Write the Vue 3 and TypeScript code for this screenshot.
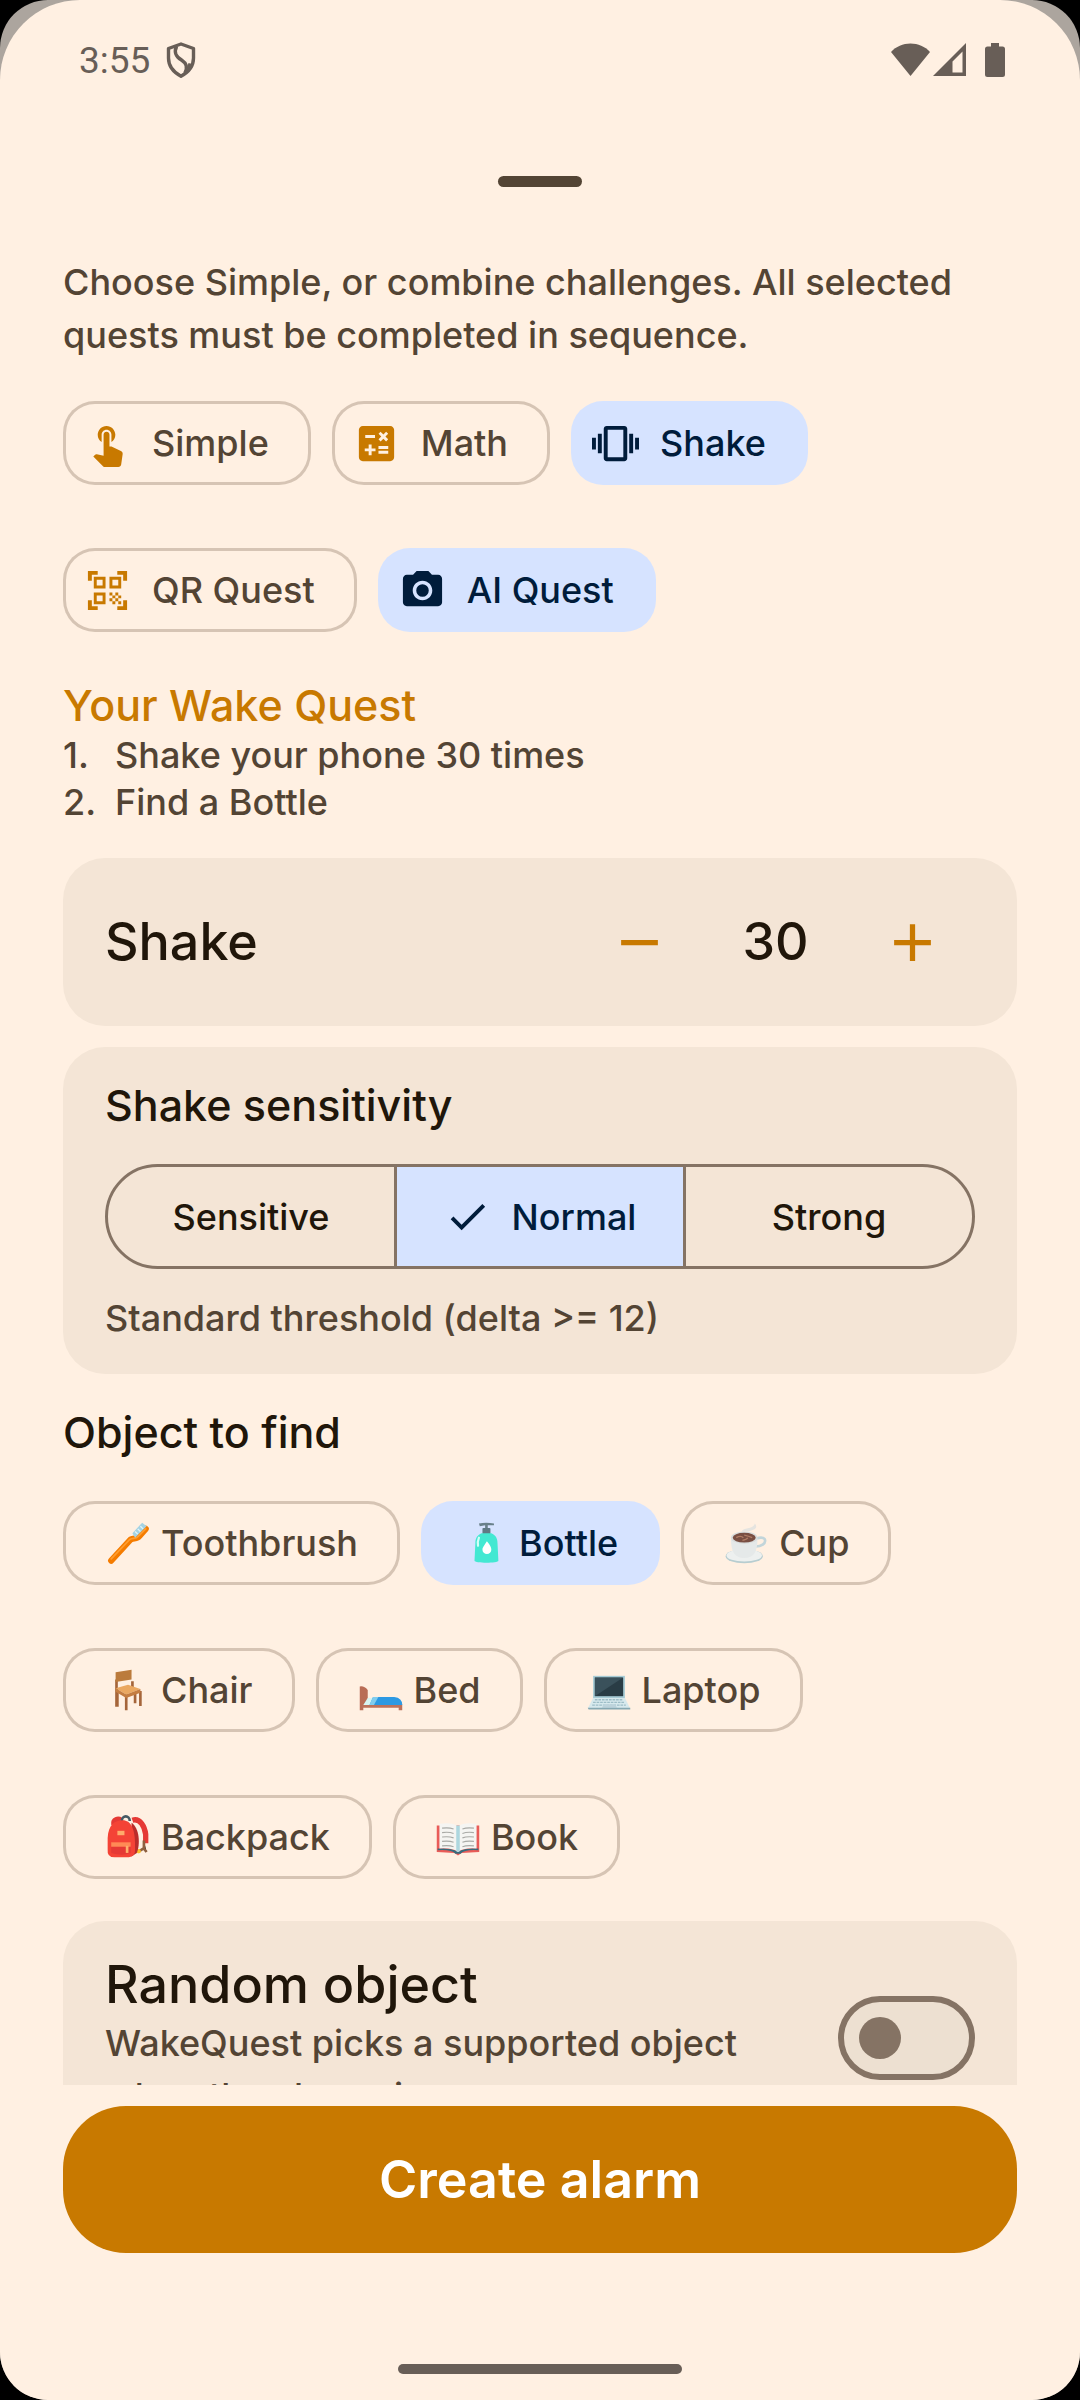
<script setup lang="ts">
import { ref } from 'vue'

interface Quest {
  id: string
  label: string
  path: string
}

interface FindObject {
  id: string
  label: string
}

const quests: Quest[] = [
  {
    id: 'simple',
    label: 'Simple',
    path: 'M9 11.24V7.5C9 6.12 10.12 5 11.5 5S14 6.12 14 7.5v3.74c1.21-.81 2-2.18 2-3.74C16 5.01 13.99 3 11.5 3S7 5.01 7 7.5c0 1.56.79 2.93 2 3.74zm9.84 4.63l-4.54-2.26c-.17-.07-.35-.11-.54-.11H13v-6c0-.83-.67-1.5-1.5-1.5S10 6.67 10 7.5v10.74l-3.43-.72c-.08-.01-.15-.03-.24-.03-.31 0-.59.13-.79.33l-.79.8 4.94 4.94c.27.27.65.44 1.06.44h6.79c.75 0 1.33-.55 1.44-1.28l.75-5.27c.01-.07.02-.14.02-.2 0-.62-.38-1.16-.91-1.38z',
  },
  {
    id: 'math',
    label: 'Math',
    path: 'M19 3H5c-1.1 0-2 .9-2 2v14c0 1.1.9 2 2 2h14c1.1 0 2-.9 2-2V5c0-1.1-.9-2-2-2zm-5.97 4.06L14.09 6l1.41 1.41L16.91 6l1.06 1.06-1.41 1.41 1.41 1.41-1.06 1.06-1.41-1.4-1.41 1.41-1.06-1.06 1.41-1.41-1.41-1.42zM6.25 7.72h5v1.5h-5v-1.5zM11.5 16h-2v2H8v-2H6v-1.5h2v-2h1.5v2h2V16zm6.5 1.25h-5v-1.5h5v1.5zm0-2.5h-5v-1.5h5v1.5z',
  },
  {
    id: 'shake',
    label: 'Shake',
    path: 'M0 15h2V9H0v6zm3 2h2V7H3v10zm19-8v6h2V9h-2zm-3 8h2V7h-2v10zM16.5 3h-9C6.67 3 6 3.67 6 4.5v15c0 .83.67 1.5 1.5 1.5h9c.83 0 1.5-.67 1.5-1.5v-15c0-.83-.67-1.5-1.5-1.5zM16 19H8V5h8v14z',
  },
  {
    id: 'qr',
    label: 'QR Quest',
    path: 'M9.5 6.5v3h-3v-3h3M11 5H5v6h6V5zm-1.5 9.5v3h-3v-3h3M11 13H5v6h6v-6zm6.5-6.5v3h-3v-3h3M19 5h-6v6h6V5zm-6 8h1.5v1.5H13V13zm1.5 1.5H16V16h-1.5v-1.5zM16 13h1.5v1.5H16V13zm-3 3h1.5v1.5H13V16zm1.5 1.5H16V19h-1.5v-1.5zM16 16h1.5v1.5H16V16zm1.5-1.5H19V16h-1.5v-1.5zm0 3H19V19h-1.5v-1.5zM22 7h-2V4h-3V2h5v5zm0 15v-5h-2v3h-3v2h5zM2 22h5v-2H4v-3H2v5zM2 2v5h2V4h3V2H2z',
  },
  {
    id: 'ai',
    label: 'AI Quest',
    path: 'M12 8.8a3.2 3.2 0 1 0 0 6.4 3.2 3.2 0 1 0 0-6.4zM9 2 7.17 4H4c-1.1 0-2 .9-2 2v12c0 1.1.9 2 2 2h16c1.1 0 2-.9 2-2V6c0-1.1-.9-2-2-2h-3.17L15 2H9zm3 15c-2.76 0-5-2.24-5-5s2.24-5 5-5 5 2.24 5 5-2.24 5-5 5z',
  },
]

const objects: FindObject[] = [
  { id: 'toothbrush', label: 'Toothbrush' },
  { id: 'bottle', label: 'Bottle' },
  { id: 'cup', label: 'Cup' },
  { id: 'chair', label: 'Chair' },
  { id: 'bed', label: 'Bed' },
  { id: 'laptop', label: 'Laptop' },
  { id: 'backpack', label: 'Backpack' },
  { id: 'book', label: 'Book' },
]

const levels = ['Sensitive', 'Normal', 'Strong']

const selectedQuests = ref<string[]>(['shake', 'ai'])
const selectedObject = ref('bottle')
const level = ref('Normal')
const shakes = ref(30)
const randomObject = ref(false)

function toggleQuest(id: string) {
  selectedQuests.value = selectedQuests.value.includes(id)
    ? selectedQuests.value.filter((q) => q !== id)
    : [...selectedQuests.value, id]
}
</script>

<template>
  <div class="device">
    <div class="scrim">
      <main class="sheet">
        <header class="status">
          <span class="clock">3:55</span>
          <svg class="shield" viewBox="0 0 30 36" aria-hidden="true">
            <path d="M15 2 27.500 6.500V16c0 8.500-5.500 14.500-12.500 18.200C8 30.500 2.500 24.500 2.500 16V6.500z" fill="none" stroke="currentColor" stroke-width="3.400" stroke-linejoin="round" />
            <path d="M10.500 4.500C7.500 11 10 14.500 15.500 18c5 3.300 6.500 7 3.500 13" fill="none" stroke="currentColor" stroke-width="3.600" />
            <path d="M22.500 21 26 22l-7 9.500z" fill="currentColor" />
          </svg>
          <span class="spacer"></span>
          <svg class="radio" viewBox="0 0 76 34" aria-hidden="true">
            <path d="M0 9C5 3.500 12 .500 19.500 .500S34 3.500 39 9L19.500 33z" fill="currentColor" />
            <path d="M75 0v33H42zM71.500 8.500 61.500 18.500V29.500h10z" fill="currentColor" fill-rule="evenodd" />
          </svg>
          <svg class="battery" viewBox="0 0 20 34" aria-hidden="true">
            <path d="M6 0h8v3.500h3.500A2.500 2.500 0 0 1 20 6v25.500a2.500 2.500 0 0 1-2.500 2.500h-15A2.500 2.500 0 0 1 0 31.500V6a2.500 2.500 0 0 1 2.500-2.500H6z" fill="currentColor" />
          </svg>
        </header>

        <div class="handle"></div>

        <div class="scroll">
          <p class="body">Choose Simple, or combine challenges. All selected quests must be completed in sequence.</p>

          <div class="chips quests">
            <button
              v-for="q in quests"
              :key="q.id"
              type="button"
              class="chip with-icon"
              :class="{ on: selectedQuests.includes(q.id) }"
              :aria-pressed="selectedQuests.includes(q.id)"
              @click="toggleQuest(q.id)"
            >
              <svg class="icon" viewBox="0 0 24 24" aria-hidden="true"><path :d="q.path" fill="currentColor" /></svg>
              <span>{{ q.label }}</span>
            </button>
          </div>

          <section class="summary">
            <h2 class="title accent">Your Wake Quest</h2>
            <ol class="steps">
              <li><span class="num">1.</span><span>Shake your phone {{ shakes }} times</span></li>
              <li><span class="num">2.</span><span>Find a Bottle</span></li>
            </ol>
          </section>

          <section class="card counter">
            <h2 class="large">Shake</h2>
            <button type="button" class="step" aria-label="Fewer shakes" @click="shakes--">
              <svg viewBox="0 0 24 24" aria-hidden="true"><path d="M5 11h14v2H5z" fill="currentColor" /></svg>
            </button>
            <output class="large value">{{ shakes }}</output>
            <button type="button" class="step" aria-label="More shakes" @click="shakes++">
              <svg viewBox="0 0 24 24" aria-hidden="true"><path d="M19 13h-6v6h-2v-6H5v-2h6V5h2v6h6z" fill="currentColor" /></svg>
            </button>
          </section>

          <section class="card sensitivity">
            <h2 class="title">Shake sensitivity</h2>
            <div class="segments" role="radiogroup" aria-label="Shake sensitivity">
              <label v-for="l in levels" :key="l" class="segment" :class="{ on: level === l }">
                <input v-model="level" type="radio" name="level" :value="l" />
                <svg v-if="level === l" class="icon" viewBox="0 0 24 24" aria-hidden="true">
                  <path d="M9 16.170 4.830 12l-1.420 1.410L9 19 21 7l-1.410-1.410z" fill="currentColor" />
                </svg>
                <span>{{ l }}</span>
              </label>
            </div>
            <p class="body">Standard threshold (delta &gt;= 12)</p>
          </section>

          <h2 class="title objects-title">Object to find</h2>
          <div class="chips">
            <button
              v-for="o in objects"
              :key="o.id"
              type="button"
              class="chip"
              :class="{ on: selectedObject === o.id }"
              :aria-pressed="selectedObject === o.id"
              @click="selectedObject = o.id"
            >
              <svg class="emoji" viewBox="-2 -2 52 52" aria-hidden="true">
                <g v-if="o.id === 'toothbrush'">
                  <path d="M5 42 27 18c4-2 7 0 10-4l7-8" stroke="#f57c00" stroke-width="7" stroke-linecap="round" fill="none" transform="translate(0 2)" />
                  <path d="M5 42 26 20c4-2 7 0 10-4l8-8" stroke="#ff9d2f" stroke-width="2" stroke-linecap="round" fill="none" />
                  <path d="m29 13 11-12 5 4-13 13z" fill="#a4d3e4" />
                  <path d="m32 11 3 3m0-6 3 3m0-6 3 3" stroke="#e4f4f8" stroke-width="1.500" />
                </g>
                <g v-else-if="o.id === 'bottle'">
                  <path d="M16 2q8-2 17 0v2h-7v4h-3V4l-6 1z" fill="#69808a" />
                  <rect x="20" y="7" width="9" height="7" rx="1" fill="#607984" />
                  <path d="M19 13h11c5 2 7 6 7 11l1 20c0 3-27 3-27 0l1-20c0-5 2-9 7-11z" fill="#43e8d2" />
                  <path d="M16 18q-2 5-1 9" stroke="#d2fff8" stroke-width="2.500" stroke-linecap="round" fill="none" />
                  <path d="M25 22c4 5 5 7 5 9.500a5 5 0 0 1-10 0c0-2.500 2-4.500 5-9.500z" fill="#fff" />
                </g>
                <g v-else-if="o.id === 'cup'">
                  <path d="M19 11c2-5 13-2 15-9 5 6-3 8-8 9z" fill="#e5e4e0" />
                  <ellipse cx="22" cy="39" rx="21" ry="8" fill="#b7cdd0" />
                  <ellipse cx="22" cy="38" rx="20" ry="7" fill="#edf0ef" />
                  <path d="M36 19c13-5 13 9-1 9" fill="none" stroke="#c2d5da" stroke-width="3" />
                  <path d="M7 19c0 15 4 22 15 22s15-7 15-22z" fill="#e5e9e9" />
                  <ellipse cx="22" cy="18" rx="15" ry="7" fill="#d9dddd" />
                  <ellipse cx="22" cy="18" rx="13" ry="5.500" fill="#794f43" />
                  <path d="M13 18q5-3 8 0m1-3q5 1 9 3m-11 3q5-1 6-3" stroke="#b17d65" stroke-width="1.500" fill="none" />
                </g>
                <g v-else-if="o.id === 'chair'">
                  <path d="M11 12v31m18-29v10M22 29v18M38 25v17M32 27v12M12 26v17" stroke="#a5653a" stroke-width="3" />
                  <path d="m10 4 18-3v11l-18 3z" fill="#bb7b3c" />
                  <path d="m10 22 14-4 14 5-16 6z" fill="#eaa861" />
                  <path d="m10 22 12 7 16-6v4l-16 6-12-7z" fill="#c47d41" />
                </g>
                <g v-else-if="o.id === 'bed'">
                  <path d="M0 20q5-1 9 4v17H4v6H0z" fill="#b96d56" />
                  <path d="M3 40h45v7h-4v-3H3z" fill="#bd725b" />
                  <path d="M9 33h9v8H4z" fill="#d8f4f1" />
                  <path d="M15 32h24q9 1 9 9H11z" fill="#2c99e3" />
                  <path d="m15 32 6 0-5 9h-5z" fill="#81cdee" />
                </g>
                <g v-else-if="o.id === 'laptop'">
                  <path d="M6 8h36v26H6z" fill="#a6cbd5" />
                  <path d="M8 10h32v21H8z" fill="#293c45" />
                  <path d="m8 31 32-21H8z" fill="#3a515b" />
                  <path d="M6 33h36l6 12H0z" fill="#d7e9ed" />
                  <path d="M8 35h32M6 38h36M5 41h38" stroke="#9dbdc7" stroke-width="1.500" stroke-dasharray="3 1" />
                  <path d="M18 40h13l2 4H16z" fill="#bdd3db" />
                  <path d="M0 44h48v2H1z" fill="#86a8b2" />
                </g>
                <g v-else-if="o.id === 'backpack'">
                  <path d="M8 10c-1-6 5-7 8-5M29 5c9-3 14 8 15 16v10" fill="none" stroke="#e53935" stroke-width="6" />
                  <path d="M17 6c0-7 9-7 9 0" fill="none" stroke="#455a64" stroke-width="3" />
                  <path d="M42 28v9l3 4M35 41l8-5" stroke="#8e6040" stroke-width="3" />
                  <circle cx="36" cy="40" r="2.500" fill="#fbc02d" />
                  <path d="M28 8c9 6 10 24 6 34l-6 4z" fill="#b92d2b" />
                  <path d="M1 25C2 10 9 5 18 5s15 9 14 34q0 7-7 8H9q-9 0-8-9z" fill="#f44336" />
                  <path d="M12 17h8v5h-8z" fill="#ffab6b" />
                  <path d="M5 31h22v11q-10 4-22 0z" fill="#e53935" />
                  <path d="M5 30h22v5H5z" fill="#ff8a55" />
                  <path d="M23 34v8" stroke="#ffb06b" stroke-width="3" />
                </g>
                <g v-else>
                  <path d="M0 11h48v30l-20 1-4 3-4-3-20-1z" fill="#e95c58" />
                  <path d="M1 37c9 0 17 0 23 4 6-4 14-4 23-4v2q-16-1-20 4h-6Q17 38 1 39z" fill="#386b7c" />
                  <path d="M3 9q15-2 21 3 6-5 21-3v28q-15-1-21 4-6-5-21-4z" fill="#f5f5f2" />
                  <path d="M22 11h4v29l-2 1-2-1z" fill="#add7df" />
                  <path d="M6 14q8-1 13 1M6 19q8-1 13 1M6 24q8-1 13 1M6 29q8-1 13 1M6 34q8-1 13 1M29 15q5-2 13-1M29 20q5-2 13-1M29 25q5-2 13-1M29 30q5-2 13-1M29 35q5-2 13-1" fill="none" stroke="#a9aaa6" stroke-width="1.300" />
                </g>
              </svg>
              <span>{{ o.label }}</span>
            </button>
          </div>

          <section class="card random">
            <div class="random-text">
              <h2 id="random-title" class="large">Random object</h2>
              <p class="body">WakeQuest picks a supported object when the alarm rings.</p>
            </div>
            <input v-model="randomObject" class="switch" type="checkbox" role="switch" aria-labelledby="random-title" />
          </section>
        </div>

        <footer class="footer">
          <button type="button" class="create">Create alarm</button>
          <div class="home"></div>
        </footer>
      </main>
    </div>
  </div>
</template>

<style>
body {
  margin: 0;
  background: #000;
}
</style>

<style scoped>
.device {
  --bg: #fff0e2;
  --card: #f4e5d6;
  --ink: #20160a;
  --muted: #534434;
  --accent: #c87900;
  --line: #857364;
  --on: #d6e3ff;
  --on-ink: #001c3b;
  background: #000;
  font-family: Inter, "Noto Sans", sans-serif;
  font-size: 36px;
  font-weight: 500;
  color: var(--muted);
}

.device *,
.device *::before {
  box-sizing: border-box;
}

.scrim {
  height: 100vh;
  overflow: hidden;
  border-radius: 48px;
  background: #aca59e;
}

.sheet {
  display: flex;
  flex-direction: column;
  height: 100%;
  border-radius: 80px 80px 0 0;
  background: var(--bg);
}

h2,
p,
ol {
  margin: 0;
  padding: 0;
}

button {
  margin: 0;
  padding: 0;
  border: 0;
  background: none;
  font: inherit;
  color: inherit;
}

.status {
  display: flex;
  flex: none;
  align-items: center;
  height: 120px;
  padding: 0 75px 0 79px;
  color: #685e57;
}

.clock {
  font-family: Roboto, sans-serif;
  font-size: 37px;
  font-weight: 400;
}

.shield {
  width: 30px;
  height: 36px;
  margin-left: 16px;
}

.spacer {
  flex: 1;
}

.radio {
  width: 76px;
  height: 34px;
}

.battery {
  width: 20px;
  height: 34px;
  margin-left: 18px;
}

.handle {
  flex: none;
  align-self: center;
  width: 84px;
  height: 11px;
  margin: 56px 0 69px;
  border-radius: 6px;
  background: var(--muted);
}

.scroll {
  flex: 1;
  min-height: 0;
  overflow: hidden;
  padding: 0 63px;
}

.body {
  line-height: 53px;
}

.chips {
  display: flex;
  flex-wrap: wrap;
  gap: 63px 21px;
}

.quests {
  margin-top: 39px;
}

.chip {
  display: flex;
  align-items: center;
  gap: 10px;
  height: 84px;
  padding: 0 42px;
  border-radius: 32px;
  box-shadow: inset 0 0 0 3px #d6c4b4;
}

.with-icon {
  gap: 21px;
  padding-left: 21px;
}

.chip.on {
  box-shadow: none;
  background: var(--on);
  color: var(--on-ink);
}

.icon {
  flex: none;
  width: 47px;
  height: 47px;
}

.chip .icon {
  color: var(--accent);
}

.chip.on .icon {
  color: var(--on-ink);
}

.emoji {
  flex: none;
  width: 46px;
  height: 46px;
}

.summary {
  margin: 47px 0 32px;
}

.title {
  font-size: 43px;
  font-weight: 500;
  line-height: 53px;
  color: var(--ink);
}

.accent {
  color: var(--accent);
}

.large {
  font-size: 52px;
  font-weight: 500;
  line-height: 64px;
  color: var(--ink);
}

.steps {
  list-style: none;
  line-height: 47px;
}

.steps li {
  display: flex;
}

.num {
  width: 52px;
}

.card {
  padding: 32px 42px;
  border-radius: 42px;
  background: var(--card);
}

.counter {
  display: flex;
  align-items: center;
  padding-top: 21px;
  padding-bottom: 21px;
}

.counter h2 {
  flex: 1;
}

.step {
  display: grid;
  place-items: center;
  width: 126px;
  height: 126px;
  color: var(--accent);
}

.step svg {
  width: 63px;
  height: 63px;
}

.value {
  width: 147px;
  text-align: center;
}

.sensitivity {
  margin-top: 21px;
  padding-bottom: 29px;
}

.segments {
  display: flex;
  height: 105px;
  margin: 32px 0 23px;
  overflow: hidden;
  border: 3px solid var(--line);
  border-radius: 53px;
}

.segment {
  position: relative;
  display: flex;
  flex: 1;
  align-items: center;
  justify-content: center;
  gap: 21px;
  color: var(--ink);
}

.segment + .segment {
  border-left: 3px solid var(--line);
}

.segment.on {
  background: var(--on);
  color: var(--on-ink);
}

.segment input {
  position: absolute;
  inset: 0;
  margin: 0;
  opacity: 0;
}

.objects-title {
  margin: 32px 0 42px;
}

.random {
  display: flex;
  align-items: center;
  gap: 42px;
  margin-top: 42px;
}

.random-text {
  flex: 1;
}

.switch {
  display: flex;
  flex: none;
  align-items: center;
  appearance: none;
  width: 137px;
  height: 84px;
  margin: 0;
  padding: 0 15px;
  border: 6px solid var(--line);
  border-radius: 42px;
  background: #ede0d1;
}

.switch::before {
  content: "";
  width: 42px;
  height: 42px;
  border-radius: 50%;
  background: var(--line);
}

.switch:checked {
  justify-content: flex-end;
}

.footer {
  flex: none;
  padding: 21px 63px 26px;
}

.create {
  display: block;
  width: 100%;
  height: 147px;
  border-radius: 63px;
  background: var(--accent);
  color: #fff;
  font-size: 52px;
  font-weight: 600;
}

.home {
  width: 284px;
  height: 10px;
  margin: 111px auto 0;
  border-radius: 5px;
  background: #685e57;
}
</style>
